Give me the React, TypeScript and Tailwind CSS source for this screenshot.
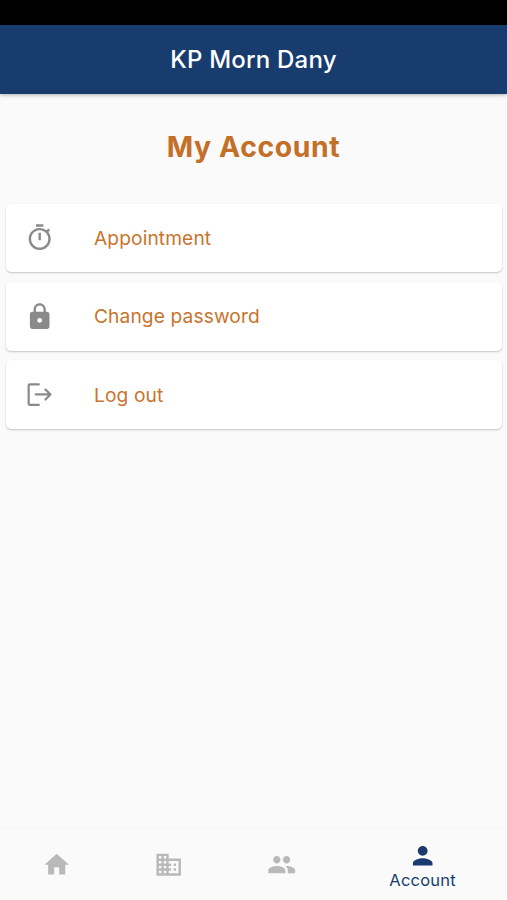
import type { ReactNode } from "react";

const TimerIcon = () => (
  <svg viewBox="0 0 24 24" className="size-[29.4px]" fill="currentColor">
    <path d="M15 1H9v2h6V1zm-4 13h2V8h-2v6zm8.03-6.61l1.42-1.42c-.43-.51-.9-.99-1.41-1.41l-1.42 1.42C16.07 4.74 14.12 4 12 4c-4.97 0-9 4.03-9 9s4.02 9 9 9 9-4.03 9-9c0-2.12-.74-4.07-1.97-5.61zM12 20c-3.87 0-7-3.13-7-7s3.13-7 7-7 7 3.13 7 7-3.13 7-7 7z" />
  </svg>
);

const LockIcon = () => (
  <svg viewBox="0 0 24 24" className="size-[29.4px]" fill="currentColor">
    <path d="M18 8h-1V6c0-2.76-2.24-5-5-5S7 3.24 7 6v2H6c-1.1 0-2 .9-2 2v10c0 1.1.9 2 2 2h12c1.1 0 2-.9 2-2V10c0-1.1-.9-2-2-2zm-6 9c-1.1 0-2-.9-2-2s.9-2 2-2 2 .9 2 2-.9 2-2 2zm3.1-9H8.9V6c0-1.71 1.39-3.1 3.1-3.1 1.71 0 3.1 1.39 3.1 3.1v2z" />
  </svg>
);

const LogoutIcon = () => (
  <svg
    viewBox="0 0 24 24"
    className="size-[29.4px]"
    fill="none"
    stroke="currentColor"
    strokeWidth="1.8"
    strokeLinecap="round"
    strokeLinejoin="round"
  >
    <path d="M11.3 3.5H4a1 1 0 0 0-1 1v14.8a1 1 0 0 0 1 1h7.3M8.8 11.8h12M16.7 7.7l4.1 4.1-4.1 4.1" />
  </svg>
);

const NAV: { id: string; path: string; label?: string }[] = [
  { id: "home", path: "M10 20v-6h4v6h5v-8h3L12 3 2 12h3v8z" },
  {
    id: "business",
    path: "M12 7V3H2v18h20V7H12zM6 19H4v-2h2v2zm0-4H4v-2h2v2zm0-4H4V9h2v2zm0-4H4V5h2v2zm4 12H8v-2h2v2zm0-4H8v-2h2v2zm0-4H8V9h2v2zm0-4H8V5h2v2zm10 12h-8v-2h2v-2h-2v-2h2v-2h-2V9h8v10zm-2-8h-2v2h2v-2zm0 4h-2v2h2v-2z",
  },
  {
    id: "people",
    path: "M16 11c1.66 0 2.99-1.34 2.99-3S17.66 5 16 5c-1.66 0-3 1.34-3 3s1.34 3 3 3zm-8 0c1.66 0 2.99-1.34 2.99-3S9.66 5 8 5C6.34 5 5 6.34 5 8s1.34 3 3 3zm0 2c-2.33 0-7 1.17-7 3.5V19h14v-2.5c0-2.33-4.67-3.5-7-3.5zm8 0c-.29 0-.62.02-.97.05 1.16.84 1.97 1.97 1.97 3.45V19h6v-2.5c0-2.33-4.67-3.5-7-3.5z",
  },
  {
    id: "account",
    path: "M12 12c2.21 0 4-1.79 4-4s-1.79-4-4-4-4 1.79-4 4 1.79 4 4 4zm0 2c-2.67 0-8 1.34-8 4v2h16v-2c0-2.66-5.33-4-8-4z",
    label: "Account",
  },
];

function Row({ icon, label }: { icon: ReactNode; label: string }) {
  return (
    <button className="flex h-[68.6px] w-full items-center rounded-[5px] bg-white pl-[19.5px] text-left shadow-[0_1px_2px_rgba(0,0,0,0.22)]">
      <span className="w-[69px] shrink-0 text-[#8a8a8a]">{icon}</span>
      <span className="text-[19.2px] leading-6 tracking-[0.1px] text-[#c9742d]">{label}</span>
    </button>
  );
}

export default function App() {
  return (
    <div className="flex h-[900px] w-full flex-col overflow-hidden bg-[#fafafa] font-['Inter',sans-serif]">
      <div className="h-[25px] shrink-0 bg-black" />
      <header className="flex h-[69px] shrink-0 items-center justify-center bg-[#183c6e] shadow-[0_1px_4px_rgba(0,0,0,0.3)]">
        <h1 className="text-[24px] font-medium leading-8 tracking-[0.2px] text-white">KP Morn Dany</h1>
      </header>

      <main className="flex-1 px-[5.5px]">
        <h2 className="pt-[33px] text-center text-[28.4px] font-bold leading-10 tracking-[0.6px] text-[#c46f28]">My Account</h2>
        <div className="mt-[36.7px] flex flex-col gap-[9.8px]">
          <Row icon={<TimerIcon />} label="Appointment" />
          <Row icon={<LockIcon />} label="Change password" />
          <Row icon={<LogoutIcon />} label="Log out" />
        </div>
      </main>

      <nav className="flex h-[72px] shrink-0 border-t border-[#f5f5f5]">
        {NAV.map(({ id, path, label }) => (
          <button
            key={id}
            className={`flex basis-0 flex-col items-center ${label ? "grow-[1.5] pt-[12px] text-[#183c6e]" : "grow pt-[20.6px] text-[#b9b9b9]"}`}
          >
            <svg viewBox="0 0 24 24" className="size-[29.4px] shrink-0" fill="currentColor">
              <path d={path} />
            </svg>
            {label && <span className="text-[16.5px] leading-5 tracking-[0.2px]">{label}</span>}
          </button>
        ))}
      </nav>
    </div>
  );
}
